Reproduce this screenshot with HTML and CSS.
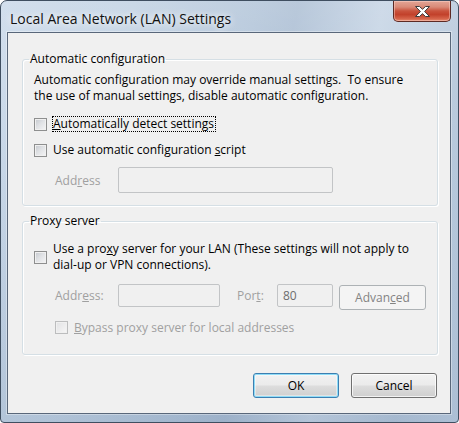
FILE: index.html
```html
<!DOCTYPE html>
<html lang="en">
<head>
<meta charset="utf-8">
<title>Local Area Network (LAN) Settings</title>
<link rel="stylesheet" href="styles.css">
</head>
<body>
<div class="window">
  <div class="titlebar">
    <span class="title">Local Area Network (LAN) Settings</span>
    <div class="close">
      <svg width="17" height="13" viewBox="0 0 17 13">
        <path d="M1.5 1.5 H5.5 L8.5 4.3 L11.5 1.5 H15.5 L10.6 6.5 L15.5 11.5 H11.5 L8.5 8.7 L5.5 11.5 H1.5 L6.4 6.5 Z" fill="#fff" stroke="#3b3b3b" stroke-width="1" stroke-linejoin="round"/>
      </svg>
    </div>
  </div>
  <div class="client">
    <fieldset class="group">
      <legend>Automatic configuration</legend>
      <div class="gbody g1">
        <p class="desc">Automatic configuration may override manual settings.&nbsp; To ensure<br>the use of manual settings, disable automatic configuration.</p>
        <div class="crow row-a">
          <span class="cb"></span>
          <span class="lbl focus"><u>A</u>utomatically detect settings</span>
        </div>
        <div class="crow row-b">
          <span class="cb"></span>
          <span class="lbl">Use automatic configuration <u>s</u>cript</span>
        </div>
        <div class="frow frow-a">
          <span class="flabel">Add<u>r</u>ess</span>
          <span class="tb tb-long"></span>
        </div>
      </div>
    </fieldset>
    <fieldset class="group group-proxy">
      <legend>Proxy server</legend>
      <div class="gbody g2">
        <div class="crow row-proxy">
          <span class="cb"></span>
          <span class="lbl multi">Use a pro<u>x</u>y server for your LAN (These settings will not apply to<br>dial-up or VPN connections).</span>
        </div>
        <div class="frow frow-b">
          <span class="flabel">Addr<u>e</u>ss:</span>
          <span class="tb tb-addr"></span>
          <span class="flabel plabel">Por<u>t</u>:</span>
          <span class="tb tb-port">80</span>
          <span class="btn btn-adv">Advan<u>c</u>ed</span>
        </div>
        <div class="crow row-bypass">
          <span class="cb cb-dis"></span>
          <span class="lbl dis"><u>B</u>ypass proxy server for local addresses</span>
        </div>
      </div>
    </fieldset>
    <div class="buttons">
      <span class="btn btn-default">OK</span>
      <span class="btn">Cancel</span>
    </div>
  </div>
</div>
</body>
</html>
```
FILE: styles.css
```css
html, body {
  margin: 0;
  padding: 0;
  background: #ffffff;
}

body {
  font-family: "Open Sans", "Noto Sans", "DejaVu Sans", sans-serif;
  font-size: 12px;
  color: #000;
}

.window {
  width: 459px;
  height: 423px;
  box-sizing: border-box;
  border: 1px solid #3f4e60;
  border-radius: 7px 7px 4px 4px;
  padding: 0 7px 8px 6px;
  display: flex;
  flex-direction: column;
  background:
    linear-gradient(180deg, rgba(255,255,255,0.18) 0%, rgba(255,255,255,0) 40%, rgba(60,90,130,0.12) 100%),
    linear-gradient(100deg, #c9d8e9 0%, #bfd0e2 25%, #b0c3d8 48%, #aabdd3 56%, #c4d3e4 72%, #b4c6da 88%, #bccde0 100%);
}

.titlebar {
  flex: none;
  height: 31px;
  display: flex;
  justify-content: space-between;
  align-items: flex-start;
}

.title {
  margin: 8px 0 0 3px;
  font-size: 14px;
  line-height: 20px;
  color: #111;
  text-shadow: 0 0 6px rgba(255,255,255,0.9), 0 0 10px rgba(255,255,255,0.7);
}

.close {
  width: 58px;
  height: 21px;
  box-sizing: border-box;
  border: 1px solid #5d2a24;
  border-top: none;
  border-radius: 0 0 5px 5px;
  display: flex;
  align-items: center;
  justify-content: center;
  background: linear-gradient(180deg, #e3a596 0%, #d98a78 30%, #c9523c 50%, #c2412b 68%, #d5634a 88%, #e58a6e 100%);
  box-shadow: inset 0 0 0 1px rgba(255,220,210,0.45);
}

.close svg {
  display: block;
}

.client {
  flex: 1;
  border: 1px solid #59677a;
  background: #f0f0f0;
  padding: 18px 12px 0 14px;
  display: flex;
  flex-direction: column;
  box-shadow: 0 0 0 1px rgba(255,255,255,0.35);
}

.group {
  margin: 0;
  padding: 0;
  min-width: 0;
  border: 1px solid #d5dfe5;
  border-radius: 3px;
  box-shadow: inset 1px 1px 0 #ffffff, 1px 1px 0 #ffffff;
}

.group legend {
  margin-left: 6px;
  padding: 0 1px;
  line-height: 16px;
}

.group-proxy {
  margin-top: 7px;
}

.gbody.g1 {
  padding: 5px 11px 12px 11px;
}

.gbody.g2 {
  padding: 12px 11px 19px 11px;
}

.desc {
  margin: 0;
  line-height: 16px;
}

.crow {
  display: flex;
  align-items: center;
}

.row-a {
  margin-top: 12px;
  height: 16px;
}

.row-b {
  margin-top: 10px;
  height: 16px;
}

.row-proxy {
  margin-top: 0;
}

.row-bypass {
  margin-top: 10px;
  height: 15px;
}

.row-bypass .cb {
  margin-left: 21px;
}

.cb {
  flex: none;
  width: 13px;
  height: 13px;
  box-sizing: border-box;
  border: 1px solid #8e8f8f;
  padding: 1px;
  background-color: #f4f4f4;
  background-image: linear-gradient(135deg, #c3c7cd 0%, #dfe1e4 45%, #f5f5f6 100%);
  background-clip: content-box;
}

.cb-dis {
  border-color: #bcbdbe;
  background-color: #f5f5f5;
  background-image: linear-gradient(135deg, #e1e2e4 0%, #ececed 50%, #f7f7f7 100%);
}

.lbl {
  margin-left: 6px;
  line-height: 16px;
  white-space: nowrap;
}

.lbl.focus {
  margin-left: 5px;
  line-height: 14px;
  border: 1px dotted #000;
  padding-right: 1px;
}

.lbl.multi {
  line-height: 16px;
}

.lbl.dis {
  line-height: 15px;
  color: #a0a0a0;
}

.frow {
  display: flex;
  align-items: flex-start;
}

.frow-a {
  margin-top: 9px;
  height: 26px;
  align-items: center;
}

.frow-b {
  margin-top: 11px;
  height: 26px;
}

.flabel {
  flex: none;
  width: 63px;
  margin-left: 21px;
  color: #a0a0a0;
  line-height: 23px;
}

.plabel {
  width: 40px;
  margin-left: 17px;
}

.tb {
  flex: none;
  box-sizing: border-box;
  border: 1px solid #c2c4c6;
  border-radius: 2px;
  background: #f0f0f0;
}

.tb-long {
  width: 215px;
  height: 26px;
}

.tb-addr {
  width: 102px;
  height: 23px;
}

.tb-port {
  width: 56px;
  height: 23px;
  padding-left: 5px;
  line-height: 21px;
  color: #6d6d6d;
}

.btn {
  flex: none;
  width: 86px;
  height: 25px;
  box-sizing: border-box;
  border: 1px solid #707070;
  border-radius: 3px;
  display: flex;
  align-items: center;
  justify-content: center;
  line-height: 16px;
  background: linear-gradient(180deg, #f2f2f2 0%, #ebebeb 48%, #dddddd 52%, #cfcfcf 100%);
  box-shadow: inset 0 0 0 1px rgba(255,255,255,0.75);
}

.btn-default {
  border-color: #3c7fb1;
  box-shadow: inset 0 0 0 1px #8fdcf7, inset 0 0 0 2px rgba(255,255,255,0.4);
}

.btn-adv {
  width: 87px;
  margin-top: 1px;
  margin-left: 6px;
  border-color: #adb2b5;
  background: #f4f4f4;
  box-shadow: none;
  color: #838383;
}

.buttons {
  margin-top: 18px;
  display: flex;
  justify-content: flex-end;
  gap: 12px;
  padding-right: 1px;
}
```
